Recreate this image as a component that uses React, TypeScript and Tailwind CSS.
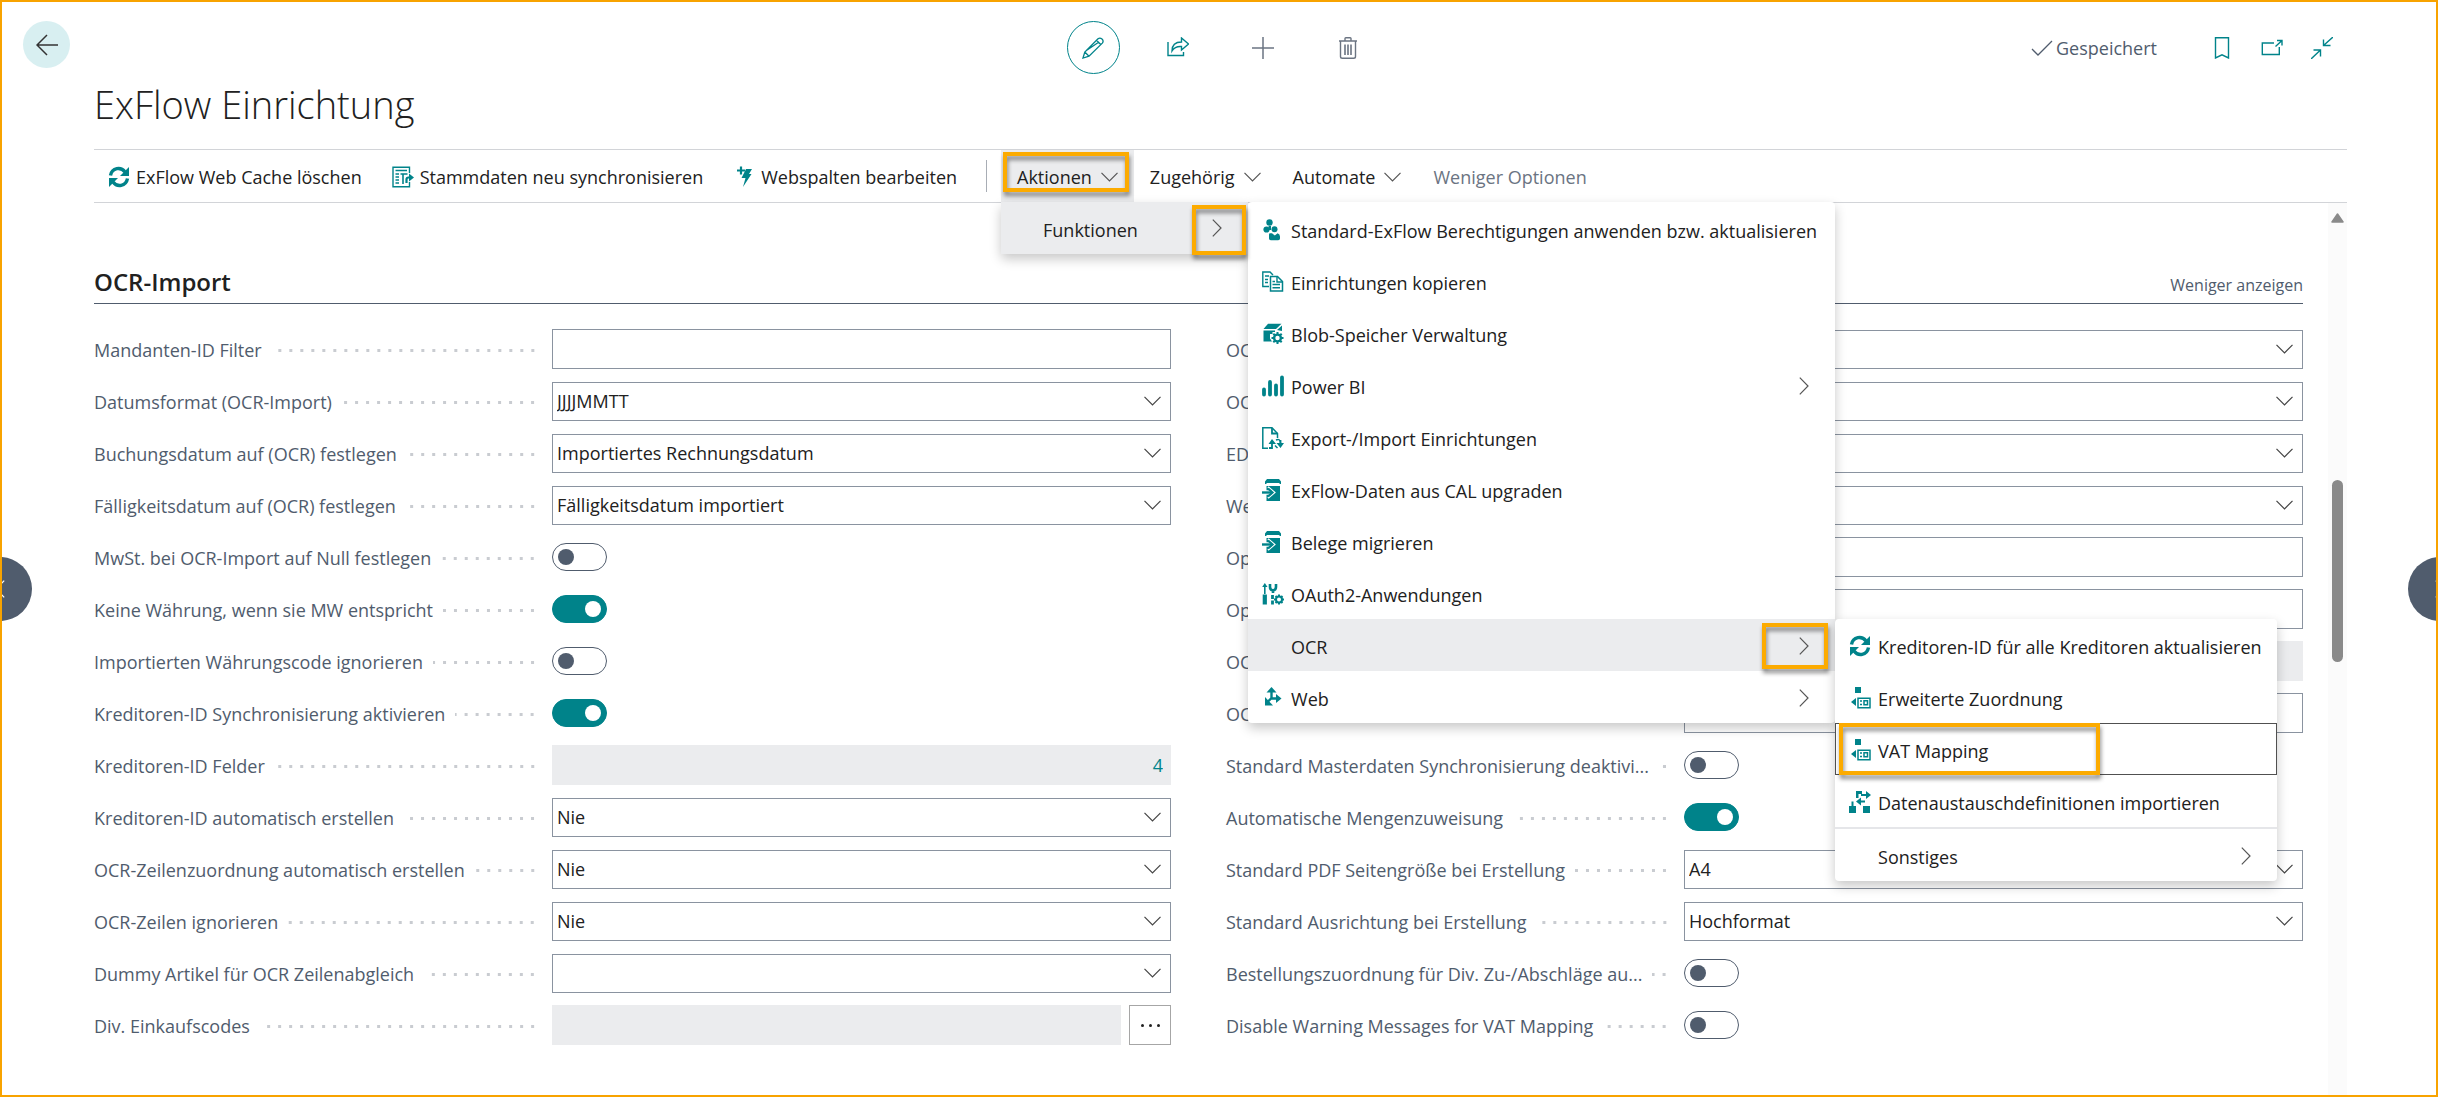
import React, { useId } from 'react';

const TEAL = 'text-[#00838a]';

interface IconProps {
  className?: string;
}

function Svg({ className = '', children }: { className?: string; children: React.ReactNode }) {
  return (
    <svg viewBox="0 0 22 22" fill="none" stroke="currentColor" aria-hidden="true" className={`size-[22px] shrink-0 ${className}`}>
      {children}
    </svg>
  );
}

function ChevronDown({ className = '' }: IconProps) {
  return (
    <svg viewBox="0 0 17 10" fill="none" stroke="currentColor" strokeWidth="1.2" aria-hidden="true" className={`h-[10px] w-[17px] shrink-0 ${className}`}>
      <path d="M.5.8 8.500 9 16.500.8" />
    </svg>
  );
}

function ChevronRight({ className = '' }: IconProps) {
  return (
    <svg viewBox="0 0 10 18" fill="none" stroke="currentColor" strokeWidth="1.2" aria-hidden="true" className={`h-[18px] w-[10px] shrink-0 ${className}`}>
      <path d="M.8.6 9 9 .8 17.400" />
    </svg>
  );
}

function RefreshIcon() {
  return (
    <Svg className={TEAL}>
      <g strokeWidth="3.4">
        <path d="M2.500 9.500C4 1.500 13 .5 17 6" />
        <path d="M19.500 12.500C18 20.500 9 21.500 5 16" />
      </g>
      <g fill="currentColor" stroke="none">
        <path d="M21 1v9h-9z" />
        <path d="M1 21v-9h9z" />
      </g>
    </Svg>
  );
}

function SyncTextIcon() {
  return (
    <Svg className={TEAL}>
      <path d="M17.500 7V1.300H1V20.700h16.500V16" strokeWidth="1.4" />
      <path d="M3.500 4.500h11.500M3.500 8h3.500M3.500 11h3.500M3.500 14h3.500M3.500 17h3.500" strokeWidth="1.4" />
      <path d="M8.500 8h7M11 8v10" strokeWidth="1.6" />
      <path d="M14.500 17v-3.500q0-2 2-2h1" strokeWidth="2.2" />
      <path d="M17 7.500l5 4-5 4z" fill="currentColor" stroke="none" />
    </Svg>
  );
}

function BoltPlusIcon() {
  return (
    <Svg className={TEAL}>
      <path d="M8 .5v8M4 4.500h8" strokeWidth="2.2" />
      <path d="M13 3h6l-3 5h2.500L10 21l2.500-9H8.500z" fill="currentColor" stroke="none" />
    </Svg>
  );
}

function PeopleIcon() {
  return (
    <Svg className={TEAL}>
      <g fill="currentColor" stroke="none">
        <circle cx="7.500" cy="3.500" r="3.200" />
        <circle cx="4.500" cy="10.500" r="3.100" />
        <circle cx="12.500" cy="10.300" r="3" />
        <path d="M6.500 7h2.500v4H7z" />
        <path d="M7.500 14.200h2.500l2.800 2.300 2.800-2.300q2.400.8 2.400 3.300v2q0 1.800-1.800 1.800H8.800q-1.800 0-1.800-1.800v-4z" />
      </g>
    </Svg>
  );
}

function CopyIcon() {
  return (
    <Svg className={TEAL}>
      <path d="M7 15.500H.8V1H8l3 3" strokeWidth="1.4" />
      <path d="M8.500 5.500h7l5 5v9.500h-12z" strokeWidth="1.5" />
      <path d="M15 5.500v5.500h5.500M10.500 10.500h2.500M10.500 13.500h7.500M10.500 16.800h7.500M3 5h4M3 8.500h3M3 11.500h3" strokeWidth="1.4" />
    </Svg>
  );
}

function BlobGearIcon() {
  return (
    <Svg className={TEAL}>
      <g fill="currentColor" stroke="none">
        <path d="M6 .8h13.500L14 6H1.500z" />
        <path d="M15 7l5-4.500V8z" />
        <path d="M1.500 7.500H13v1.500h-2.500v2H8v4.500l2 3H1.500z" />
      </g>
      <circle cx="15.500" cy="15" r="3.400" strokeWidth="2.4" />
      <path d="M15.500 9v3M15.500 18v3M9.500 15h3M18.500 15h3M11.300 10.800l2 2M17.700 17.200l2 2M11.300 19.200l2-2M17.700 12.800l2-2" strokeWidth="2" />
    </Svg>
  );
}

function BarsIcon() {
  return (
    <Svg className={TEAL}>
      <path d="M2 14.500v5M8 7v12.500M14 10.500v9M20 2.500v17" strokeWidth="3.800" strokeLinecap="round" />
    </Svg>
  );
}

function ExportImportIcon() {
  return (
    <Svg className={TEAL}>
      <path d="M6 21.200H.8V.8H10L15.500 6.500V11" strokeWidth="1.5" />
      <path d="M10 1v5.500h5.500" strokeWidth="1.800" />
      <path d="M7 21h3v-5M18.500 13v4" strokeWidth="1.800" />
      <path d="M10 12l4 5H6.500z M22 16l-3.500 5-4-5z" fill="currentColor" stroke="none" />
      <path d="M14 13q4-2 4.500 3M13 18.500l2.500 2.500" strokeWidth="1.500" />
    </Svg>
  );
}

function MigrateIcon() {
  return (
    <Svg className={TEAL}>
      <g fill="currentColor" stroke="none">
        <path d="M5 0h12l2 2.500v2.500h-1.500V4H4.500v1H3V2.500z" />
        <path d="M4.500 7H18v15H4.500v-4.500z" />
      </g>
      <path d="M6 8l6.500 5.500L6 19" stroke="white" strokeWidth="1.800" />
      <path d="M0 13.500h9" stroke="white" strokeWidth="4.500" />
      <path d="M0 13.500h9" strokeWidth="2.400" />
      <path d="M6 9.500l4.500 4-4.500 4" strokeWidth="2.200" />
    </Svg>
  );
}

function ToolsIcon() {
  return (
    <Svg className={TEAL}>
      <path d="M2.800 0 5.500 4H.2z" fill="currentColor" stroke="none" />
      <path d="M2.800 3v8" strokeWidth="1.600" />
      <path d="M2.800 11.500v10" strokeWidth="4.200" />
      <path d="M8 1v3q0 3 3 3.500 3-.5 3-3.500V1M11 7v3" strokeWidth="2.600" />
      <path d="M10.500 12v9.500" strokeWidth="2.800" strokeDasharray="4 1.500" />
      <circle cx="17" cy="16.500" r="3" strokeWidth="2" />
      <path d="M17 11.500v2M17 19.500v2M12 16.500h2M20 16.500h2M13.500 13l1.500 1.500M19 18.500l1.500 1.500M13.500 20l1.500-1.500M19 14.500l1.500-1.500" strokeWidth="2" />
    </Svg>
  );
}

function WebIcon() {
  return (
    <Svg className={TEAL}>
      <path d="M9.500 3v8.500h6M9.500 11 4.500 16" strokeWidth="2.400" />
      <g fill="currentColor" stroke="none">
        <path d="M9.500 0l5 5.500H4.500z" />
        <path d="M19.500 11.500 14 16V7z" />
        <path d="M3 18.500V10l8 8.500z" />
      </g>
    </Svg>
  );
}

function MappingIcon() {
  return (
    <Svg className={TEAL}>
      <g fill="currentColor" stroke="none">
        <path d="M6 0h6v6H6z" />
        <path d="M7 11v8l-5-4z" />
      </g>
      <path d="M9 11.200h12v9.500H9z" strokeWidth="1.500" />
      <path d="M11 14h2M11 17.500h2" strokeWidth="1.500" />
      <path d="M15 13.800h3.500v4H15z" strokeWidth="1.500" />
    </Svg>
  );
}

function DataExchangeIcon() {
  return (
    <Svg className={TEAL}>
      <g fill="currentColor" stroke="none">
        <path d="M0 15h7v7H0zM14 15h7v7h-7z" />
        <path d="M7 0h6v3H9.500v4H7z" />
        <path d="M17 0l5 4-5 4z" />
        <path d="M12 6.500v8l-5-4z" />
      </g>
      <path d="M12 4h6M10 10.500h6M3.500 15v-4.500" strokeWidth="2" />
    </Svg>
  );
}

/* Orange frame that calls out a control */
function Highlight({ className }: { className: string }) {
  return (
    <span className={`pointer-events-none absolute z-30 border-4 border-[#fcab00] drop-shadow-[1px_4px_2px_rgba(0,0,0,0.45)] ${className}`} />
  );
}

interface FieldData {
  label: string;
  kind: 'text' | 'select' | 'toggle' | 'number' | 'readonly' | 'lookup';
  value?: string;
  on?: boolean;
}

const leftFields: FieldData[] = [
  { label: 'Mandanten-ID Filter', kind: 'text' },
  { label: 'Datumsformat (OCR-Import)', kind: 'select', value: 'JJJJMMTT' },
  { label: 'Buchungsdatum auf (OCR) festlegen', kind: 'select', value: 'Importiertes Rechnungsdatum' },
  { label: 'Fälligkeitsdatum auf (OCR) festlegen', kind: 'select', value: 'Fälligkeitsdatum importiert' },
  { label: 'MwSt. bei OCR-Import auf Null festlegen', kind: 'toggle' },
  { label: 'Keine Währung, wenn sie MW entspricht', kind: 'toggle', on: true },
  { label: 'Importierten Währungscode ignorieren', kind: 'toggle' },
  { label: 'Kreditoren-ID Synchronisierung aktivieren', kind: 'toggle', on: true },
  { label: 'Kreditoren-ID Felder', kind: 'number', value: '4' },
  { label: 'Kreditoren-ID automatisch erstellen', kind: 'select', value: 'Nie' },
  { label: 'OCR-Zeilenzuordnung automatisch erstellen', kind: 'select', value: 'Nie' },
  { label: 'OCR-Zeilen ignorieren', kind: 'select', value: 'Nie' },
  { label: 'Dummy Artikel für OCR Zeilenabgleich', kind: 'select', value: '' },
  { label: 'Div. Einkaufscodes', kind: 'lookup' },
];

const rightFields: FieldData[] = [
  { label: 'OCR', kind: 'select', value: '' },
  { label: 'OCR', kind: 'select', value: '' },
  { label: 'EDI', kind: 'select', value: '' },
  { label: 'Web', kind: 'select', value: '' },
  { label: 'Optionen', kind: 'text' },
  { label: 'Optionen', kind: 'text' },
  { label: 'OCR', kind: 'readonly' },
  { label: 'OCR', kind: 'text' },
  { label: 'Standard Masterdaten Synchronisierung deaktivi...', kind: 'toggle' },
  { label: 'Automatische Mengenzuweisung', kind: 'toggle', on: true },
  { label: 'Standard PDF Seitengröße bei Erstellung', kind: 'select', value: 'A4' },
  { label: 'Standard Ausrichtung bei Erstellung', kind: 'select', value: 'Hochformat' },
  { label: 'Bestellungszuordnung für Div. Zu-/Abschläge au...', kind: 'toggle' },
  { label: 'Disable Warning Messages for VAT Mapping', kind: 'toggle' },
];

function FieldControl({ id, field }: { id: string; field: FieldData }) {
  switch (field.kind) {
    case 'text':
      return <input id={id} type="text" className="h-10 w-full border border-[#8a93a0] bg-white px-1 text-[#212121]" />;
    case 'select':
      return (
        <div className="relative">
          <select id={id} defaultValue={field.value} className="h-[39px] w-full appearance-none border border-[#8a93a0] bg-white px-1 text-[#212121]">
            <option value={field.value}>{field.value}</option>
          </select>
          <ChevronDown className="pointer-events-none absolute top-[14px] right-[10px] text-[#444]" />
        </div>
      );
    case 'toggle':
      return (
        <input
          id={id}
          type="checkbox"
          role="switch"
          defaultChecked={field.on}
          className="flex h-7 w-[55px] appearance-none items-center rounded-full border border-[#505c6d] px-[5px] before:size-4 before:rounded-full before:bg-[#505c6d] checked:justify-end checked:border-[#00838a] checked:bg-[#00838a] checked:before:bg-white"
        />
      );
    case 'number':
      return <input id={id} type="text" readOnly value={field.value} className="h-10 w-full bg-[#ebecee] px-2 text-right text-[#00838a]" />;
    case 'readonly':
      return <input id={id} type="text" readOnly className="h-10 w-full bg-[#ebecee] px-2" />;
    case 'lookup':
      return (
        <div className="flex gap-2">
          <input id={id} type="text" readOnly className="h-10 min-w-0 flex-1 bg-[#ebecee] px-2" />
          <button type="button" aria-label="Auswählen" className="flex h-10 w-[42px] items-center justify-center gap-[5px] border border-[#a6a6a6]">
            <span className="size-[3px] rounded-full bg-[#212121]" />
            <span className="size-[3px] rounded-full bg-[#212121]" />
            <span className="size-[3px] rounded-full bg-[#212121]" />
          </button>
        </div>
      );
  }
}

function Field({ field }: { field: FieldData }) {
  const id = useId();
  return (
    <div className="flex h-10 items-center">
      <div className="flex w-[458px] shrink-0 items-center pt-[2px] pr-[14px]">
        <label htmlFor={id} className="whitespace-nowrap text-[#505c6d]">{field.label}</label>
        <span className="ml-[10px] h-[3px] flex-1 bg-[radial-gradient(circle,#c9ccd1_1.5px,transparent_2px)] bg-[length:11px_3px] bg-right" />
      </div>
      <div className="min-w-0 flex-1">
        <FieldControl id={id} field={field} />
      </div>
    </div>
  );
}

interface MenuItemProps {
  icon?: React.ReactNode;
  label: string;
  expandable?: boolean;
  className?: string;
  children?: React.ReactNode;
}

function MenuItem({ icon, label, expandable, className = '', children }: MenuItemProps) {
  return (
    <li className={`relative ${className}`}>
      <button type="button" className="flex h-[52px] w-full items-center gap-[7px] pt-[2px] pr-[26px] pl-[14px] text-left whitespace-nowrap text-[#212121]">
        <span className="size-[22px] shrink-0">{icon}</span>
        <span className="flex-1 pt-[2px]">{label}</span>
        {expandable && <ChevronRight className="text-[#555]" />}
      </button>
      {children}
    </li>
  );
}

const menuBox = 'absolute bg-white rounded-sm shadow-[0_5px_12px_rgba(0,0,0,0.22)]';

function OcrMenu() {
  return (
    <ul className={`${menuBox} top-0 left-full w-[442px]`}>
      <MenuItem icon={<RefreshIcon />} label="Kreditoren-ID für alle Kreditoren aktualisieren" />
      <MenuItem icon={<MappingIcon />} label="Erweiterte Zuordnung" />
      <MenuItem icon={<MappingIcon />} label="VAT Mapping" className="outline outline-1 -outline-offset-1 outline-[#505050]">
        <Highlight className="top-0 left-1 h-[52px] w-[261px]" />
      </MenuItem>
      <MenuItem icon={<DataExchangeIcon />} label="Datenaustauschdefinitionen importieren" />
      <MenuItem label="Sonstiges" expandable className="border-t-2 border-[#e5e6e9]" />
    </ul>
  );
}

function FunctionsMenu() {
  return (
    <ul className={`${menuBox} top-0 left-full w-[587px] pt-px`}>
      <MenuItem icon={<PeopleIcon />} label="Standard-ExFlow Berechtigungen anwenden bzw. aktualisieren" />
      <MenuItem icon={<CopyIcon />} label="Einrichtungen kopieren" />
      <MenuItem icon={<BlobGearIcon />} label="Blob-Speicher Verwaltung" />
      <MenuItem icon={<BarsIcon />} label="Power BI" expandable />
      <MenuItem icon={<ExportImportIcon />} label="Export-/Import Einrichtungen" />
      <MenuItem icon={<MigrateIcon />} label="ExFlow-Daten aus CAL upgraden" />
      <MenuItem icon={<MigrateIcon />} label="Belege migrieren" />
      <MenuItem icon={<ToolsIcon />} label="OAuth2-Anwendungen" />
      <MenuItem label="OCR" expandable className="z-10 bg-[#ebecee]">
        <Highlight className="top-1 right-[7px] h-[46px] w-[66px]" />
        <OcrMenu />
      </MenuItem>
      <MenuItem icon={<WebIcon />} label="Web" expandable />
    </ul>
  );
}

function Toolbar() {
  return (
    <nav className="relative z-20 flex h-[54px] items-stretch border-y border-[#d2d4d8] pl-[14px] whitespace-nowrap text-[#212121]">
      <div className="flex gap-[30px]">
        <button type="button" className="flex items-center gap-[6px] pt-px"><RefreshIcon />ExFlow Web Cache löschen</button>
        <button type="button" className="flex items-center gap-[6px] pt-px"><SyncTextIcon />Stammdaten neu synchronisieren</button>
        <button type="button" className="flex items-center gap-[6px] pt-px"><BoltPlusIcon />Webspalten bearbeiten</button>
      </div>
      <span className="mr-[14px] ml-[29px] h-8 w-px self-center bg-[#a8adb5]" />
      <div className="relative flex bg-[#ebecee]">
        <button type="button" className="flex items-center gap-[9px] px-4 pt-px">Aktionen<ChevronDown className="text-[#555]" /></button>
        <Highlight className="top-[2px] right-[5px] bottom-[10px] left-[2px]" />
        <ul className={`${menuBox} top-full left-0 w-[247px]`}>
          <li className="relative bg-[#ebecee]">
            <button type="button" className="flex h-[52px] w-full items-center justify-between pr-[26px] pl-[42px]">
              <span className="pt-1">Funktionen</span>
              <ChevronRight className="text-[#555]" />
            </button>
            <Highlight className="top-[3px] right-[2px] h-[50px] w-[54px]" />
            <FunctionsMenu />
          </li>
        </ul>
      </div>
      <button type="button" className="flex items-center gap-[9px] px-4 pt-px">Zugehörig<ChevronDown className="text-[#555]" /></button>
      <button type="button" className="flex items-center gap-[9px] px-4 pt-px">Automate<ChevronDown className="text-[#555]" /></button>
      <button type="button" className="px-4 pt-px text-[#6b7482]">Weniger Optionen</button>
    </nav>
  );
}

function TopBar() {
  return (
    <div className="grid grid-cols-[1fr_auto_1fr] items-center pt-[19px]">
      <span />
      <div className="flex items-center gap-8">
        <button type="button" aria-label="Bearbeiten" className="flex size-[53px] items-center justify-center rounded-full border border-[#00838a] text-[#00838a]">
          <Svg>
            <path d="M1 21l1.800-6L16 1.800q2-1.500 4 .3t.3 4L7 19.200zM2.800 15 7 19.200M14.500 3.300l4.200 4.200M4 13.800 17 5" strokeWidth="1.300" />
          </Svg>
        </button>
        <button type="button" aria-label="Freigeben" className="flex size-[53px] items-center justify-center text-[#00838a]">
          <Svg>
            <path d="M1 5v13.500h15.500V15" strokeWidth="1.400" />
            <path d="M5 14C5 8 8.500 5 14.500 5V1l7 6-7 6V9.500Q8 9 5 14z" strokeWidth="1.400" />
          </Svg>
        </button>
        <button type="button" aria-label="Neu" className="flex size-[53px] items-center justify-center text-[#6b7482]">
          <Svg><path d="M11 0v22M0 11h22" strokeWidth="1.500" /></Svg>
        </button>
        <button type="button" aria-label="Löschen" className="flex size-[53px] items-center justify-center text-[#6b7482]">
          <Svg>
            <path d="M2 4h18M3.500 4v15.500q0 1.800 1.800 1.800h11.400q1.800 0 1.800-1.800V4M8 4V1.500q0-.8.800-.8h4.400q.8 0 .8.8V4" strokeWidth="1.400" />
            <path d="M8 7.500v10.500M11 7.500v10.500M14 7.500v10.500" strokeWidth="1.600" />
          </Svg>
        </button>
      </div>
      <div className="flex items-center justify-end pr-[14px] text-[#505c6d]">
        <span className="flex items-center gap-[3px]">
          <Svg><path d="M1 12l6 6L21 4" strokeWidth="1.300" /></Svg>
          Gespeichert
        </span>
        <span className={`ml-[54px] flex gap-7 ${TEAL}`}>
          <button type="button" aria-label="Lesezeichen">
            <Svg><path d="M4.500.7h13v20.300L11 17.800 4.500 21z" strokeWidth="1.400" /></Svg>
          </button>
          <button type="button" aria-label="In neuem Fenster öffnen">
            <Svg>
              <path d="M13 6H1.300v11.500h17V10" strokeWidth="1.400" />
              <path d="M14.500 9.500l6.500-6M16 3.500h5v5" strokeWidth="1.400" />
            </Svg>
          </button>
          <button type="button" aria-label="Verkleinern">
            <Svg><path d="M22 0l-9.500 8.500M12.500 2.500v6h7M0 22l9.500-9M9.500 19.500V13H2.500" strokeWidth="1.400" /></Svg>
          </button>
        </span>
      </div>
    </div>
  );
}

export default function App() {
  return (
    <div className="relative flex min-h-screen overflow-hidden border-2 border-[#f8a300] bg-white font-['Open_Sans','Noto_Sans',sans-serif] text-[18px] leading-6">
      <div className="w-[92px] shrink-0 pt-[19px] pl-[21px]">
        <button type="button" aria-label="Zurück" className="flex size-[47px] items-center justify-center rounded-full bg-[#d8eff1] text-[#333]">
          <Svg><path d="M22 11H1M11 1 1 11l10 10" strokeWidth="1.500" /></Svg>
        </button>
      </div>

      <main className="mr-[89px] flex min-w-0 flex-1 flex-col">
        <TopBar />
        <h1 className="pt-[2px] pb-[17px] text-[38px] leading-14 font-light text-[#212121]">ExFlow Einrichtung</h1>
        <Toolbar />

        <div className="flex flex-1">
          <section className="min-w-0 flex-1 pr-[25px]">
            <div className="flex items-baseline justify-between border-b border-[#505c6d] pt-[63px] pb-[5px]">
              <h2 className="text-[24px] leading-8 font-semibold text-[#212121]">OCR-Import</h2>
              <button type="button" className="text-[16px] text-[#505c6d]">Weniger anzeigen</button>
            </div>
            <div className="grid grid-cols-2 gap-x-[55px] pt-[25px]">
              <div className="flex flex-col gap-3">
                {leftFields.map((field, i) => <Field key={i} field={field} />)}
              </div>
              <div className="flex flex-col gap-3">
                {rightFields.map((field, i) => <Field key={i} field={field} />)}
              </div>
            </div>
          </section>
          <div className="flex w-[19px] flex-col items-center bg-[#fbfbfb] pt-[10px]">
            <svg viewBox="0 0 13 10" aria-hidden="true" className="h-[10px] w-[13px] text-[#8a8a8a]">
              <path d="M6.500 1 12 9H1z" fill="currentColor" stroke="currentColor" strokeWidth="1.500" strokeLinejoin="round" />
            </svg>
            <div className="mt-[257px] h-[182px] w-[11px] rounded-full bg-[#8a8a8a]" />
          </div>
        </div>
      </main>

      <button type="button" aria-label="Vorheriger Datensatz" className="absolute top-[555px] -left-[34px] flex size-16 items-center justify-center rounded-full bg-[#505c6d] text-white">
        <ChevronRight className="rotate-180" />
      </button>
      <button type="button" aria-label="Nächster Datensatz" className="absolute top-[555px] -right-[36px] flex size-16 items-center justify-center rounded-full bg-[#505c6d] text-white">
        <ChevronRight />
      </button>
    </div>
  );
}
